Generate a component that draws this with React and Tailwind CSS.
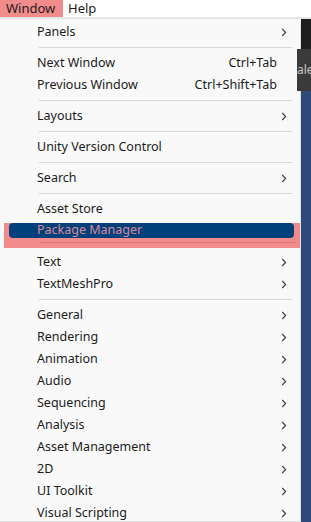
import React from "react";

const FONT = { fontFamily: "'Noto Sans', 'Open Sans', sans-serif" };

const GROUPS = [
  [{ label: "Panels", sub: true }],
  [
    { label: "Next Window", key: "Ctrl+Tab" },
    { label: "Previous Window", key: "Ctrl+Shift+Tab" },
  ],
  [{ label: "Layouts", sub: true }],
  [{ label: "Unity Version Control" }],
  [{ label: "Search", sub: true }],
  [{ label: "Asset Store" }, { label: "Package Manager", marked: true }],
  [
    { label: "Text", sub: true },
    { label: "TextMeshPro", sub: true },
  ],
  [
    { label: "General", sub: true },
    { label: "Rendering", sub: true },
    { label: "Animation", sub: true },
    { label: "Audio", sub: true },
    { label: "Sequencing", sub: true },
    { label: "Analysis", sub: true },
    { label: "Asset Management", sub: true },
    { label: "2D", sub: true },
    { label: "UI Toolkit", sub: true },
    { label: "Visual Scripting", sub: true },
  ],
];

function Chevron() {
  return (
    <svg width="6" height="9" viewBox="0 0 6 9" className="shrink-0">
      <path d="M1.2 1 L4.6 4.5 L1.2 8" fill="none" stroke="#444" strokeWidth="1.2" />
    </svg>
  );
}

function Item({ item }) {
  return (
    <div className="h-[22px] flex items-center pl-[37px] pr-[13px] text-[12.5px] text-[#1b1b1b]">
      <span className="flex-1">{item.label}</span>
      {item.key && <span className="mr-[10px]">{item.key}</span>}
      {item.sub && <Chevron />}
    </div>
  );
}

function Separator() {
  return (
    <div className="h-[9px] flex items-center pl-[39px] pr-[8px]">
      <div className="h-px w-full bg-[#d6d6d6]" />
    </div>
  );
}

// the marked row plus the rule under it, sitting in the pink annotation box
function MarkedItem({ item }) {
  return (
    <div className="h-[31px] pt-[3px]">
      <div className="ml-[4px] w-[296px] h-[25px] bg-[#f28b8b] flex flex-col">
        <div className="ml-[5px] w-[285px] h-[15px] rounded-[4px] bg-[#00407b] flex items-center pl-[28px] text-[12.5px] text-[#d98a9c]">
          {item.label}
        </div>
        <div className="h-[8px] flex items-center pl-[35px] pr-[4px]">
          <div className="h-px w-full bg-[#d27c7c]" />
        </div>
      </div>
    </div>
  );
}

export default function App() {
  return (
    <div className="w-[311px] h-[522px] overflow-hidden bg-white flex flex-col" style={FONT}>
      {/* menu bar */}
      <div className="h-[17px] flex items-stretch text-[13px] text-[#1b1b1b] shrink-0">
        <div className="w-[63px] bg-[#f28b8b] pl-[6px] leading-[17px]">Window</div>
        <div className="pl-[5px] leading-[17px]">Help</div>
      </div>
      <div className="h-[2px] bg-[#e6e6e6] shrink-0" />

      <div className="flex flex-1 min-h-0">
        {/* dropdown */}
        <div className="w-[303px] bg-[#f9f9f9] rounded-tr-[6px] border-r border-[#e0e0e0] pt-[2px] border-b">
          {GROUPS.map((group, gi) => {
            const hasMarked = group.some((g) => g.marked);
            return (
              <div key={gi}>
                {group.map((item) =>
                  item.marked ? (
                    <MarkedItem key={item.label} item={item} />
                  ) : (
                    <Item key={item.label} item={item} />
                  )
                )}
                {gi < GROUPS.length - 1 && !hasMarked && <Separator />}
              </div>
            );
          })}
        </div>

        {/* editor behind */}
        <div className="flex-1 flex flex-col">
          <div className="h-[30px] bg-[#1e1e1e]" />
          <div className="h-[42px] bg-[#3a3a3a] text-[12px] text-[#c8c8c8] leading-[42px] -ml-[4px] overflow-hidden whitespace-nowrap">
            ale
          </div>
          <div className="flex-1 bg-[#2e4a7a]" />
        </div>
      </div>
    </div>
  );
}
